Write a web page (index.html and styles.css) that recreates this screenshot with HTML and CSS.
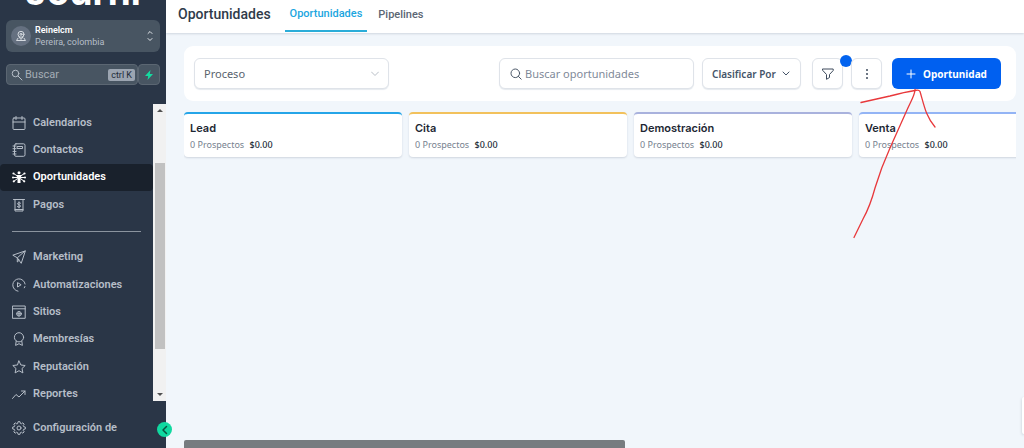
FILE: index.html
```html
<!DOCTYPE html>
<html lang="es">
<head>
<meta charset="utf-8">
<meta name="viewport" content="width=device-width, initial-scale=1">
<title>Oportunidades</title>
<link rel="stylesheet" href="styles.css">
</head>
<body>
<div class="app">
  <aside class="sidebar">
    <div class="logo">Journi</div>
    <button class="account" type="button">
      <span class="avatar"><svg class="icon" width="12" height="12" viewBox="0 0 12 12"><circle cx="6" cy="4.300" r="3"/><circle cx="6" cy="4.300" r="1"/><path d="M4 6.800L6 9.500l2-2.700M3 8.200L1.500 10.500h9L9 8.200"/></svg></span>
      <span class="account-text"><strong>Reinelcm</strong><span>Pereira, colombia</span></span>
      <svg class="icon sorter" width="8" height="14" viewBox="0 0 8 14"><path d="M2 4.500l2-2 2 2M2 9.500l2 2 2-2"/></svg>
    </button>
    <div class="quick">
      <label class="quick-search">
        <svg class="icon" width="12" height="12" viewBox="0 0 12 12"><circle cx="4.500" cy="4.500" r="3.300"/><path d="M7 7l4 4"/></svg>
        <input type="text" placeholder="Buscar" aria-label="Buscar">
        <kbd>ctrl K</kbd>
      </label>
      <button class="bolt" type="button" aria-label="Acciones rápidas"><svg width="10" height="12" viewBox="0 0 10 12"><path d="M6.500 1L1 7h3.200L3.500 11 9 5H5.800z"/></svg></button>
    </div>
    <div class="nav-wrap">
      <nav class="nav">
        <a href="#"><svg class="icon" width="14" height="14" viewBox="0 0 14 14"><rect x="1" y="2" width="12" height="11.500" rx="1"/><path d="M1 6h12M4 .5v3M10 .5v3"/></svg>Calendarios</a>
        <a href="#"><svg class="icon" width="14" height="14" viewBox="0 0 14 14"><rect x="2.500" y=".8" width="10.500" height="12.500" rx="1.500"/><path d="M5.500 3.500h5v2h-5zM1 3h3M1 5.700h3M1 8.400h3M1 11h3"/></svg>Contactos</a>
        <a href="#" class="active"><svg class="icon network" width="14" height="14" viewBox="0 0 14 14"><g fill="currentColor" stroke="none"><circle cx="7" cy="2.800" r="1.500"/><circle cx="1.500" cy="3.500" r="1.100"/><circle cx="12.500" cy="3.500" r="1.100"/><circle cx="1" cy="7.500" r="1"/><circle cx="13" cy="7.500" r="1"/><circle cx="1.800" cy="11.300" r="1.100"/><circle cx="12.200" cy="11.300" r="1.100"/><path d="M4.800 5h4.400v3.500H8.500V13h-3V8.500h-.7z"/></g><path d="M1.500 3.500L5 5.700M12.500 3.500L9 5.700M1 7.500h4M9 7.500h4M1.800 11.300L5 9M12.200 11.300L9 9"/></svg>Oportunidades</a>
        <a href="#"><svg class="icon" width="14" height="14" viewBox="0 0 14 14"><path d="M1.500 1.500h11M3 1.500v11.500h8V1.500M8.600 5.200C7.500 4.300 5.400 4.600 5.500 5.900c.1 1.200 3.100.8 3.100 2.100 0 1.300-2.200 1.500-3.300.6M7 3.800v6.100M3 11.500h8"/></svg>Pagos</a>
        <hr>
        <a href="#"><svg class="icon" width="14" height="14" viewBox="0 0 14 14"><path d="M13 1L.8 5.200l4.500 2.600L9 13zM13 1L5.300 7.800V12l1.900-1.800"/></svg>Marketing</a>
        <a href="#"><svg class="icon" width="14" height="14" viewBox="0 0 14 14"><path d="M6 13.200A6.200 6.200 0 1 1 13.100 6M12.900 8.500l-.6 1.300M5.500 5v4L8.800 7z"/></svg>Automatizaciones</a>
        <a href="#"><svg class="icon" width="14" height="14" viewBox="0 0 14 14"><path d="M.8 1h12.400v12.300H.8zM.8 3.800h12.400"/><circle cx="7" cy="8.800" r="2.300"/><path d="M4.700 8.800h4.600M7 6.500v4.600"/></svg>Sitios</a>
        <a href="#"><svg class="icon" width="14" height="14" viewBox="0 0 14 14"><circle cx="7" cy="5.300" r="4.600"/><path d="M4.200 9L3.600 13.400 7 11.700l3.400 1.700L9.800 9"/></svg>Membresías</a>
        <a href="#"><svg class="icon" width="14" height="14" viewBox="0 0 14 14"><path d="M7 1l1.900 4 4.300.5-3.200 3 .9 4.400L7 10.700l-3.900 2.200.9-4.400-3.200-3L5.100 5z"/></svg>Reputación</a>
        <a href="#"><svg class="icon" width="14" height="14" viewBox="0 0 14 14"><path d="M.5 11.500L4 7.500l3 2.500 6-6M9.500 4H13v3.500"/></svg>Reportes</a>
      </nav>
      <div class="scrollbar"><i class="up"></i><i class="thumb"></i><i class="down"></i></div>
    </div>
    <a class="settings" href="#"><svg class="icon" width="14" height="14" viewBox="0 0 14 14"><path d="M5.700 2.300L6 .7h2l.3 1.600 1.100.5 1.400-1 1.400 1.400-1 1.400.5 1.100 1.600.3v2l-1.600.3-.5 1.100 1 1.400-1.400 1.400-1.400-1-1.100.5-.3 1.600H6l-.3-1.600-1.100-.5-1.400 1-1.400-1.400 1-1.400-.5-1.100L.7 8V6l1.600-.3.500-1.100-1-1.400 1.400-1.400 1.400 1z"/><circle cx="7" cy="7" r="2"/></svg>Configuración de</a>
    <button class="collapse" type="button" aria-label="Contraer menú"><svg class="icon" width="8" height="10" viewBox="0 0 8 10"><path d="M5.500 1.500L2 5l3.500 3.500"/></svg></button>
  </aside>

  <main class="main">
    <header class="topbar">
      <h1>Oportunidades</h1>
      <a href="#" class="tab selected">Oportunidades</a>
      <a href="#" class="tab">Pipelines</a>
    </header>

    <div class="content">
      <section class="toolbar">
        <label class="field pipeline">
          <select aria-label="Pipeline"><option>Proceso</option></select>
          <svg class="icon" width="8" height="6" viewBox="0 0 8 6"><path d="M.5 1L4 4.500 7.500 1"/></svg>
        </label>
        <label class="field search">
          <svg class="icon" width="12" height="12" viewBox="0 0 12 12"><circle cx="5.300" cy="5.300" r="4.300"/><path d="M8.400 8.400l2.800 2.800"/></svg>
          <input type="text" placeholder="Buscar oportunidades" aria-label="Buscar oportunidades">
        </label>
        <button class="field sort" type="button">Clasificar Por<svg class="icon" width="8" height="6" viewBox="0 0 8 6"><path d="M1 1l3 3 3-3"/></svg></button>
        <button class="field square filter" type="button" aria-label="Filtros"><svg class="icon" width="12" height="12" viewBox="0 0 12 12"><path d="M.8 1h10.400v1.500L7.500 6.500V9.500l-3 1.800V6.500L.8 2.500z"/></svg><span class="dot"></span></button>
        <button class="field square" type="button" aria-label="Más opciones"><svg width="4" height="12" viewBox="0 0 4 12" fill="currentColor"><circle cx="2" cy="2" r="1"/><circle cx="2" cy="6" r="1"/><circle cx="2" cy="10" r="1"/></svg></button>
        <button class="primary" type="button"><svg class="icon" width="10" height="10" viewBox="0 0 10 10"><path d="M5 1v8M1 5h8"/></svg>Oportunidad</button>
      </section>

      <section class="board">
        <article class="stage blue"><h2>Lead</h2><p>0 Prospectos <b>$0.00</b></p></article>
        <article class="stage amber"><h2>Cita</h2><p>0 Prospectos <b>$0.00</b></p></article>
        <article class="stage violet"><h2>Demostración</h2><p>0 Prospectos <b>$0.00</b></p></article>
        <article class="stage sky"><h2>Venta</h2><p>0 Prospectos <b>$0.00</b></p></article>
      </section>
      <div class="board-scroll"></div>
    </div>
    <div class="side-tab"></div>
    <svg class="arrow" width="90" height="152" viewBox="850 88 90 152"><path d="M861 102.500L890 96Q905 92 915 90.500q4-1 5 1C924 105 926 117 935 127M915 89.500C915 95 911 101 907 110L890 148Q881 168 875 188C871 203 868 210 863 219L854 237.500"/></svg>
  </main>
</div>
</body>
</html>
```
FILE: styles.css
```css
* { box-sizing: border-box; }
body { margin: 0; font-family: Roboto, "Liberation Sans", sans-serif; font-size: 11px; color: #2f3b4a; }
button, input, select { font: inherit; color: inherit; }
button { cursor: pointer; }
a { color: inherit; text-decoration: none; }
svg { display: block; flex: none; }
.icon { fill: none; stroke: currentColor; stroke-width: 1; stroke-linecap: round; stroke-linejoin: round; }

.app { display: flex; height: 100vh; overflow: hidden; }

.sidebar { position: relative; z-index: 1; display: flex; flex-direction: column; flex: none; width: 166px; background: #2a3647; color: #b6bec8; }
.logo { display: flex; align-items: flex-end; justify-content: center; height: 16px; margin-bottom: 4px; color: #fff; font: 700 37px/48px Inter, sans-serif; }
.account { display: flex; align-items: center; gap: 4px; height: 32px; margin: 0 6px; padding: 0 6px 0 5px; border: 0; border-radius: 6px; background: #485562; text-align: left; }
.avatar { display: grid; place-items: center; width: 20px; height: 20px; border-radius: 50%; background: #657080; color: #d5dae0; }
.account-text { display: flex; flex: 1; flex-direction: column; font-size: 9px; line-height: 12px; }
.account-text strong { color: #fff; font-weight: 600; }
.sorter { color: #e2e6ea; }
.quick { display: flex; margin: 12px 6px 0; }
.quick-search, .bolt { height: 21px; border: 1px solid #5b6672; border-radius: 4px; background: #485562; }
.quick-search { display: flex; flex: 1; align-items: center; gap: 2px; min-width: 0; padding: 0 2px 0 4px; }
.quick-search input { flex: 1; width: 0; min-width: 0; padding: 0; border: 0; outline: 0; background: none; }
.quick-search input::placeholder { color: #a5adb6; opacity: 1; }
kbd { padding: 0 3px; border-radius: 2px; background: #9ca5b1; color: #222c39; font: 9px/12px Roboto, sans-serif; }
.bolt { display: grid; place-items: center; width: 22px; padding: 0; }
.bolt svg { fill: #14dba0; }
.nav-wrap { display: flex; height: 297px; margin-top: 19px; }
.nav { display: grid; flex: 1; grid-template-rows: repeat(4, 1fr) 25px repeat(6, 1fr); height: 304px; padding-top: 5px; }
.nav a, .settings { display: flex; align-items: center; gap: 7px; padding-left: 12px; font-weight: 600; line-height: 16px; }
.nav a { border-radius: 4px; }
.nav .active { background: #19212c; color: #fff; }
.nav hr { width: 129px; height: 1px; margin: auto 12px; border: 0; background: #8b949f; }
.scrollbar { display: flex; flex-direction: column; align-items: center; justify-content: space-between; width: 13px; padding: 4px 0; background: #f1f1f1; }
.scrollbar .thumb { width: 10px; height: 186px; margin-top: 51px; margin-bottom: auto; background: #c1c1c1; }
.up, .down { border: 3px solid transparent; }
.up { margin-top: -2px; border-bottom-color: #505050; }
.down { margin-bottom: -2px; border-top-color: #505050; }
.settings { margin-top: 19px; }
.collapse { position: absolute; right: -6px; bottom: 11px; display: grid; place-items: center; width: 15px; height: 15px; padding: 0; border: 0; border-radius: 50%; background: #10d9a0; color: #0b5340; }
.collapse svg { stroke-width: 1.5; }

.main { position: relative; display: flex; flex: 1; flex-direction: column; min-width: 0; background: #f1f6fb; }
.topbar { display: flex; flex: none; height: 33px; padding-left: 12px; background: #fff; box-shadow: 0 1px 2px #cfd6df; }
.topbar h1 { margin: 0 14px 0 0; font-size: 14px; font-weight: 500; line-height: 28px; }
.tab { height: 32px; padding: 0 5px; color: #5b6673; font-weight: 500; line-height: 29px; }
.tab.selected { color: #1ba6e0; border-bottom: 2px solid #2badd9; line-height: 28px; }
.tab + .tab { margin-left: 6px; }
.content { display: flex; flex: 1; flex-direction: column; min-height: 0; padding: 13px 8px 0 18px; }
.toolbar { display: flex; align-items: center; height: 55px; padding: 0 15px 0 10px; border-radius: 9px; background: #fff; font-family: "Noto Sans", sans-serif; }
.field { display: flex; align-items: center; height: 31px; border: 1px solid #dfe3e9; border-radius: 6px; background: #fff; box-shadow: 0 1px 1px #e6eaef; }
.pipeline, .search { width: 195px; padding: 0 9px; }
.pipeline select { flex: 1; min-width: 0; padding: 0; border: 0; outline: 0; appearance: none; background: none; color: #59636e; }
.pipeline svg { color: #b8bec6; }
.search { gap: 3px; margin-left: auto; color: #4b5868; padding-left: 10px; }
.search input { flex: 1; min-width: 0; padding: 0; border: 0; outline: 0; background: none; }
.search input::placeholder { color: #7f8a99; opacity: 1; }
.sort { justify-content: space-between; width: 99px; margin-left: 8px; padding: 0 10px 0 9px; color: #455468; font-size: 10px; font-weight: 600; white-space: nowrap; }
.square { position: relative; justify-content: center; width: 31px; padding: 0; color: #3e4b5c; }
.filter { margin: 0 8px 0 11px; }
.dot { position: absolute; top: -4px; right: -10px; width: 12px; height: 12px; border-radius: 50%; background: #0263ef; }
.primary { display: flex; align-items: center; justify-content: center; gap: 7px; width: 109px; height: 31px; margin-left: 10px; padding: 0; border: 0; border-radius: 6px; background: #0060f0; color: #fff; font-size: 10px; font-weight: 700; }
.board { display: flex; gap: 7px; margin-top: 11px; padding-bottom: 4px; overflow: hidden; }
.stage { flex: none; width: 218px; height: 45px; padding: 6px 6px 0; border-top: 2px solid; border-radius: 4px; background: #fff; box-shadow: 0 1px 2px #cfd6df; }
.stage h2 { margin: 0; color: #1d2733; font: 600 11px/16px Inter, sans-serif; }
.stage p { margin: 2px 0 0; color: #77828f; font: 9px/14px "Noto Sans", sans-serif; }
.stage b { margin-left: 3px; color: #222c38; font-weight: 500; }
.blue { border-color: #25a5e8; }
.amber { border-color: #f2c15c; }
.violet { border-color: #a9b2dd; }
.sky { border-color: #93b4f5; }
.board-scroll { width: 441px; height: 8px; margin-top: auto; border-radius: 2px 2px 0 0; background: #777c80; }
.side-tab { position: absolute; right: 0; bottom: 14px; width: 2px; height: 37px; border-radius: 3px 0 0 3px; background: #fff; box-shadow: 0 1px 3px #b9c1ca; }
.arrow { position: absolute; top: 88px; left: 684px; fill: none; stroke: #e8383b; stroke-width: 1.3; stroke-linecap: round; pointer-events: none; }
```
